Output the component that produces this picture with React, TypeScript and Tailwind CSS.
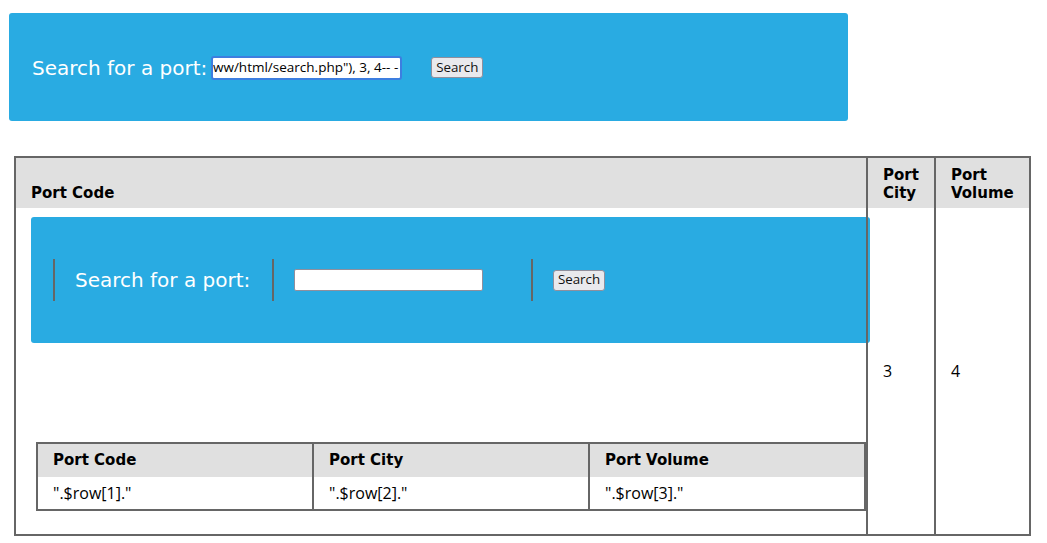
export default function App() {
  const sans = "font-['Open_Sans',sans-serif]";
  const btn =
    "shrink-0 w-[52px] h-[21px] bg-[#e9e9ed] border border-[#8f8f9d] rounded-[3px] flex items-center justify-center text-[13.33px] leading-none text-[#111] font-['Open_Sans',sans-serif]";
  return (
    <div className="min-h-[543px] bg-white text-black font-['DejaVu_Sans',sans-serif]">
      <div className="pt-[13px] pl-[9px]">
        <div className="w-[839px] h-[108px] bg-[#29abe2] rounded-[3px] flex items-center pl-[23px] pt-[1px]">
          <span className="shrink-0 text-[20px] leading-none text-white">Search for a port:</span>
          <div className="ml-[4px] shrink-0 w-[191px] h-[24px] bg-white border-2 border-[#3d7ee0] rounded-[3px] overflow-hidden flex items-center justify-end pr-[2px] whitespace-nowrap">
            <span className={`shrink-0 text-[13.5px] leading-none text-black ${sans}`}>
              ww/html/search.php"), 3, 4-- -
            </span>
          </div>
          <div className={`ml-[29px] ${btn}`}>Search</div>
        </div>
      </div>

      <div className="ml-[14px] mt-[35px] w-[1017px] border-2 border-[#666]">
        <div className="flex h-[50px] bg-[#e0e0e0] text-[15px] font-bold leading-[18px]">
          <div className="w-[850px] pl-[15px] pb-[6px] flex items-end">
            <div>Port Code</div>
          </div>
          <div className="w-[68px] border-l-2 border-[#666] pl-[15px] pb-[6px] flex items-end">
            <div>
              Port
              <br />
              City
            </div>
          </div>
          <div className="w-[95px] border-l-2 border-[#666] pl-[15px] pb-[6px] flex items-end">
            <div>
              Port
              <br />
              Volume
            </div>
          </div>
        </div>

        <div className="flex h-[326px]">
          <div className="w-[850px] pt-[9px]">
            <div className="ml-[15px] w-[839px] h-[126px] bg-[#29abe2] rounded-[3px] flex items-center pl-[22px]">
              <div className="shrink-0 w-[219px] h-[42px] border-l-2 border-[#666] pl-[20px] flex items-center">
                <span className="text-[20px] leading-none text-white whitespace-nowrap">Search for a port:</span>
              </div>
              <div className="shrink-0 w-[259px] h-[42px] border-l-2 border-[#666] pl-[20px] flex items-center">
                <div className="w-[189px] h-[22px] bg-white border border-[#8f8f9d] rounded-[2px]" />
              </div>
              <div className="shrink-0 h-[42px] border-l-2 border-[#666] pl-[20px] flex items-center">
                <div className={btn}>Search</div>
              </div>
            </div>

            <div className="mt-[99px] ml-[20px] w-[830px] border-2 border-[#666]">
              <div className="flex h-[33px] bg-[#e0e0e0] text-[15px] font-bold">
                <div className="w-[274px] pl-[15px] flex items-center">Port Code</div>
                <div className="w-[276px] border-l-2 border-[#666] pl-[15px] flex items-center">Port City</div>
                <div className="w-[276px] border-l-2 border-[#666] pl-[15px] flex items-center">Port Volume</div>
              </div>
              <div className={`flex h-[32px] bg-white text-[16px] ${sans}`}>
                <div className="w-[274px] pl-[15px] flex items-center">".$row[1]."</div>
                <div className="w-[276px] border-l-2 border-[#666] pl-[15px] flex items-center">".$row[2]."</div>
                <div className="w-[276px] border-l-2 border-[#666] pl-[15px] flex items-center">".$row[3]."</div>
              </div>
            </div>
          </div>
          <div className={`w-[68px] border-l-2 border-[#666] pl-[15px] flex items-center text-[16px] ${sans}`}>3</div>
          <div className={`w-[95px] border-l-2 border-[#666] pl-[15px] flex items-center text-[16px] ${sans}`}>4</div>
        </div>
      </div>
    </div>
  );
}
